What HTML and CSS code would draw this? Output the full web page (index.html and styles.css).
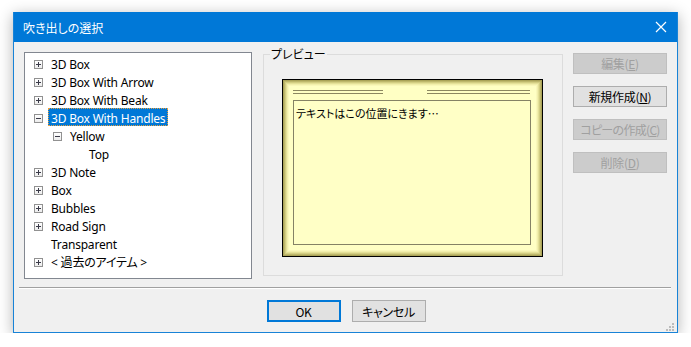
FILE: index.html
```html
<!DOCTYPE html>
<html>

<head>
    <title>吹き出しの選択</title>
    <link rel="stylesheet" href="styles.css">
</head>

<body>
    <div class="window">
        <div class="titlebar">
            <span class="title">吹き出しの選択</span>
            <svg class="close" width="12" height="12" viewBox="0 0 12 12">
                <path d="M1 1 L11 11 M11 1 L1 11" stroke="#fff" stroke-width="1.2" fill="none" />
            </svg>
        </div>
        <div class="content">
            <div class="main">
                <!-- ツリー -->
                <div class="tree">
                    <div class="node"><span class="exp plus"></span><span class="label">3D Box</span></div>
                    <div class="node"><span class="exp plus"></span><span class="label">3D Box With Arrow</span></div>
                    <div class="node"><span class="exp plus"></span><span class="label">3D Box With Beak</span></div>
                    <div class="node"><span class="exp minus"></span><span class="label selected">3D Box With Handles</span></div>
                    <div class="node lvl1"><span class="exp minus"></span><span class="label">Yellow</span></div>
                    <div class="node lvl2"><span class="exp none"></span><span class="label">Top</span></div>
                    <div class="node"><span class="exp plus"></span><span class="label">3D Note</span></div>
                    <div class="node"><span class="exp plus"></span><span class="label">Box</span></div>
                    <div class="node"><span class="exp plus"></span><span class="label">Bubbles</span></div>
                    <div class="node"><span class="exp plus"></span><span class="label">Road Sign</span></div>
                    <div class="node"><span class="exp none"></span><span class="label">Transparent</span></div>
                    <div class="node"><span class="exp plus"></span><span class="label">&lt; 過去のアイテム &gt;</span></div>
                </div>

                <!-- プレビュー -->
                <div class="group">
                    <span class="group-label">プレビュー</span>
                    <div class="card">
                        <div class="card-head">
                            <span class="rule left"></span>
                            <span class="rule right"></span>
                        </div>
                        <div class="card-body">テキストはこの位置にきます…</div>
                    </div>
                </div>

                <div class="actions">
                    <button class="btn disabled">編集(<u>E</u>)</button>
                    <button class="btn">新規作成(<u>N</u>)</button>
                    <button class="btn disabled tight">コピーの作成(<u>C</u>)</button>
                    <button class="btn disabled">削除(<u>D</u>)</button>
                </div>
            </div>
        </div>
        <div class="separator"></div>
        <div class="footer">
            <button class="btn wide default">OK</button>
            <button class="btn wide">キャンセル</button>
        </div>
        <svg class="grip" width="9" height="9" viewBox="0 0 9 9">
            <rect x="7" y="1" width="2" height="2" fill="#bcbcbc" />
            <rect x="4" y="4" width="2" height="2" fill="#bcbcbc" />
            <rect x="7" y="4" width="2" height="2" fill="#bcbcbc" />
            <rect x="1" y="7" width="2" height="2" fill="#bcbcbc" />
            <rect x="4" y="7" width="2" height="2" fill="#bcbcbc" />
            <rect x="7" y="7" width="2" height="2" fill="#bcbcbc" />
        </svg>
    </div>
</body>

</html>
```

FILE: styles.css
```css
body {
    margin: 0;
    background: #ffffff;
    font-family: "Noto Sans", "Noto Sans CJK JP", sans-serif;
    font-size: 12px;
    font-feature-settings: "palt";
    color: #000;
}

.window {
    position: relative;
    width: 663px;
    height: 319px;
    margin: 12px 0 0 13px;
    border: 1px solid #1883d7;
    background: #f0f0f0;
    box-shadow: 0 3px 14px rgba(0, 0, 0, 0.3);
}

.titlebar {
    height: 30px;
    margin-top: -1px;
    background: #0078d7;
    display: flex;
    align-items: center;
    justify-content: space-between;
    padding: 0 10px 0 9px;
}

.title {
    color: #fff;
    font-size: 12px;
    font-family: "Noto Sans CJK JP", sans-serif;
}

.content {
    padding: 10px 10px 0 10px;
}

.main {
    display: flex;
    height: 227px;
}

/* ツリー */
.tree {
    box-sizing: border-box;
    width: 228px;
    height: 227px;
    padding-top: 1px;
    background: #fff;
    border: 1px solid #828790;
}

.node {
    height: 18px;
    display: flex;
    align-items: center;
    padding-left: 9px;
    white-space: nowrap;
}

.node.lvl1 {
    padding-left: 28px;
}

.node.lvl2 {
    padding-left: 47px;
}

.exp {
    box-sizing: border-box;
    width: 9px;
    height: 9px;
    flex: none;
    position: relative;
    margin-top: 3px;
}

.exp.plus,
.exp.minus {
    border: 1px solid #919191;
    background: linear-gradient(#ffffff, #ececec);
}

.exp.plus:before,
.exp.minus:before {
    content: "";
    position: absolute;
    left: 1px;
    top: 3px;
    width: 5px;
    height: 1px;
    background: #3a3a48;
}

.exp.plus:after {
    content: "";
    position: absolute;
    left: 3px;
    top: 1px;
    width: 1px;
    height: 5px;
    background: #3a3a48;
}

.label {
    box-sizing: border-box;
    height: 18px;
    line-height: 17px;
    padding: 1px 2px 0;
    margin-left: 5px;
    border: 1px solid transparent;
    letter-spacing: -0.2px;
}

.label.selected {
    background: #0078d7;
    color: #fff;
    border: 1px dotted #e8a040;
}

/* プレビュー */
.group {
    position: relative;
    box-sizing: border-box;
    width: 300px;
    height: 222px;
    margin: 2px 0 0 11px;
    border: 1px solid #dcdcdc;
}

.group-label {
    position: absolute;
    top: -9px;
    left: 6px;
    padding: 0 1px;
    background: #f0f0f0;
    font-family: "Noto Sans CJK JP", sans-serif;
    line-height: 16px;
}

.card {
    box-sizing: border-box;
    width: 261px;
    height: 178px;
    margin: 24px 0 0 18px;
    border: 1px solid #000;
    padding: 0 11px 11px 10px;
    background: #ffffc4;
    box-shadow:
        inset 0 0 0 1px #aaa358,
        inset 0 0 0 2px #bdb76c,
        inset 0 0 0 3px #d2cd82,
        inset 0 0 0 4px #e4e098,
        inset 0 0 0 5px #f2efac,
        inset 0 0 0 6px #faf8ba;
}

.card-head {
    height: 20px;
    display: flex;
    justify-content: space-between;
    align-items: flex-start;
    padding-top: 10px;
    box-sizing: border-box;
}

.rule {
    box-sizing: border-box;
    height: 4px;
    border-top: 1px solid #8c8760;
    border-bottom: 1px solid #8c8760;
}

.rule.left {
    width: 90px;
}

.rule.right {
    width: 103px;
    margin-right: 1px;
}

.card-body {
    box-sizing: border-box;
    height: 145px;
    border: 1px solid #858265;
    background: #ffffc6;
    padding: 4px 2px;
    font-family: "Noto Sans CJK JP", sans-serif;
    font-size: 11px;
    line-height: 16px;
}

/* ボタン */
.actions {
    display: flex;
    flex-direction: column;
    gap: 12px;
    margin: 1px 0 0 10px;
}

.btn {
    box-sizing: border-box;
    width: 94px;
    height: 21px;
    padding: 0;
    background: #e1e1e1;
    border: 1px solid #adadad;
    font-family: "Noto Sans CJK JP", sans-serif;
    font-feature-settings: "palt";
    font-size: 12px;
    letter-spacing: -0.3px;
    color: #000;
    white-space: nowrap;
}

.btn.disabled {
    background: #cccccc;
    border-color: #bfbfbf;
    color: #a0a0a0;
}

.btn.tight {
    letter-spacing: -0.7px;
}

.separator {
    height: 1px;
    margin: 8px 6px 0 5px;
    background: #a0a0a0;
    border-bottom: 1px solid #fff;
}

.footer {
    display: flex;
    justify-content: center;
    gap: 11px;
    margin-top: 11px;
    padding-left: 1px;
}

.btn.wide {
    width: 74px;
    height: 22px;
}

.btn.default {
    border: 2px solid #0078d7;
}

.grip {
    position: absolute;
    right: 3px;
    bottom: 1px;
}
```
